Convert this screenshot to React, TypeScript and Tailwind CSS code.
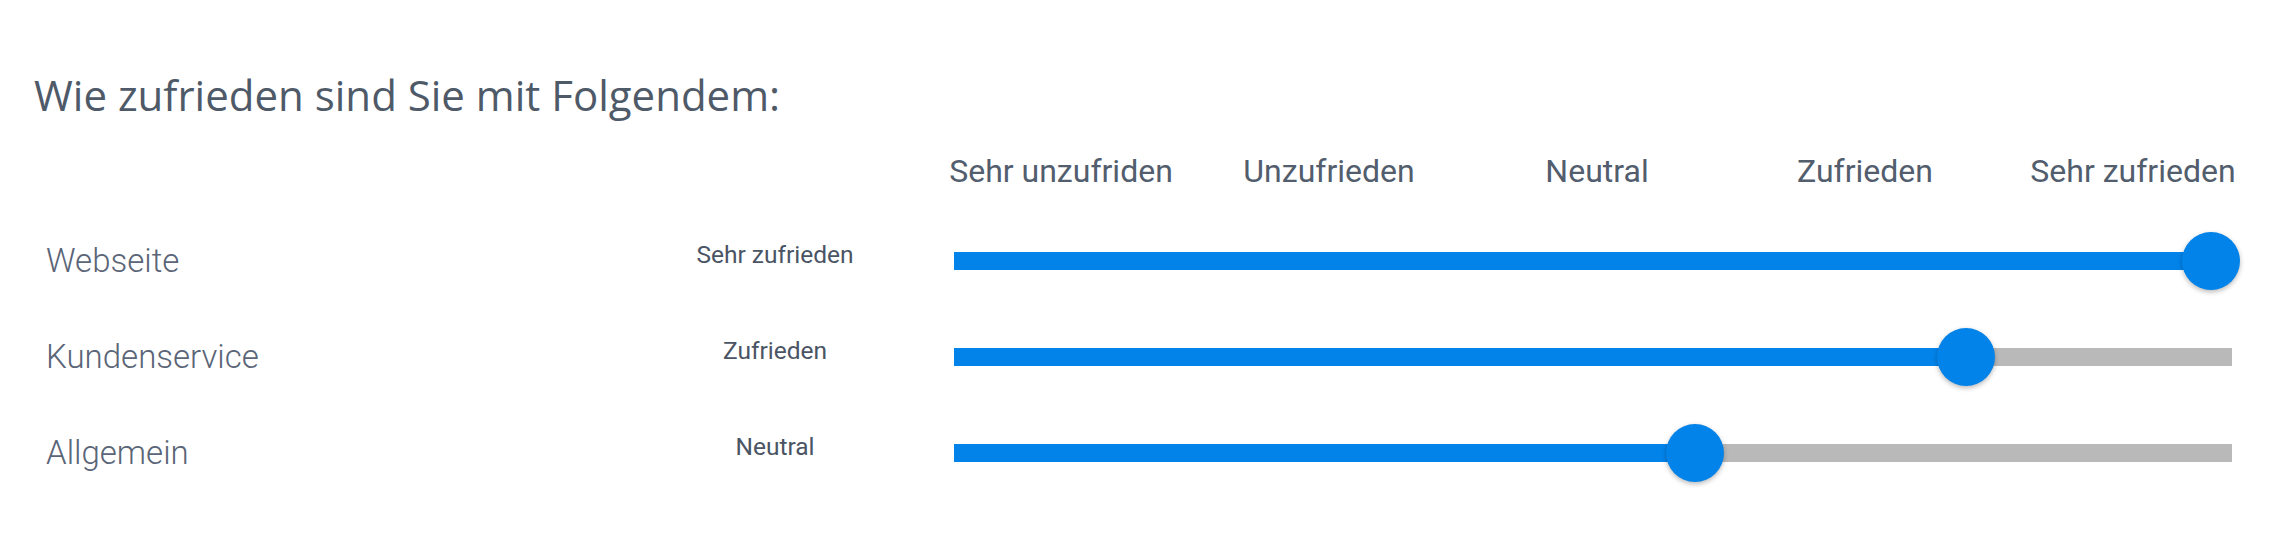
const SCALE = ["Sehr unzufriden", "Unzufrieden", "Neutral", "Zufrieden", "Sehr zufrieden"];

// left edge of the thumb, in px from the start of the track
type Rating = { label: string; value: string; thumb: number };

const ratings: Rating[] = [
  { label: "Webseite", value: "Sehr zufrieden", thumb: 1228 },
  { label: "Kundenservice", value: "Zufrieden", thumb: 983 },
  { label: "Allgemein", value: "Neutral", thumb: 712 },
];

const THUMB = 58;

function Slider({ thumb }: { thumb: number }) {
  return (
    <div className="relative flex h-[58px] w-[1278px] items-center">
      <div className="h-[18px] w-full bg-[#b9b9b9]">
        <div className="h-full bg-[#0283ea]" style={{ width: Math.min(thumb + THUMB / 2, 1278) }} />
      </div>
      <div
        className="absolute top-0 h-[58px] w-[58px] rounded-full bg-[#0283ea] shadow-[0_2px_5px_rgba(0,0,0,0.28)]"
        style={{ left: thumb }}
      />
    </div>
  );
}

export default function App() {
  return (
    <div className="h-[542px] w-full bg-white px-[34px] pt-[73px] font-['Roboto',sans-serif]">
      <h1 className="font-['Open_Sans',sans-serif] text-[42px] font-normal leading-[44px] text-[#4f5a69]">
        Wie zufrieden sind Sie mit Folgendem:
      </h1>

      <div className="ml-[893px] mt-[38px] grid w-[1340px] grid-cols-5">
        {SCALE.map((s) => (
          <div key={s} className="text-center text-[32px] leading-[32px] text-[#525d6d]">
            {s}
          </div>
        ))}
      </div>

      <div className="mt-[26px] flex flex-col">
        {ratings.map((r) => (
          <div key={r.label} className="flex h-[96px] items-center pl-[12px]">
            <div className="w-[649px] text-[33px] font-light leading-[40px] text-[#5a6577]">
              {r.label}
            </div>
            <div className="mb-[12px] w-[160px] text-center text-[24.5px] leading-[30px] text-[#4a5464]">
              {r.value}
            </div>
            <div className="ml-[99px]">
              <Slider thumb={r.thumb} />
            </div>
          </div>
        ))}
      </div>
    </div>
  );
}
